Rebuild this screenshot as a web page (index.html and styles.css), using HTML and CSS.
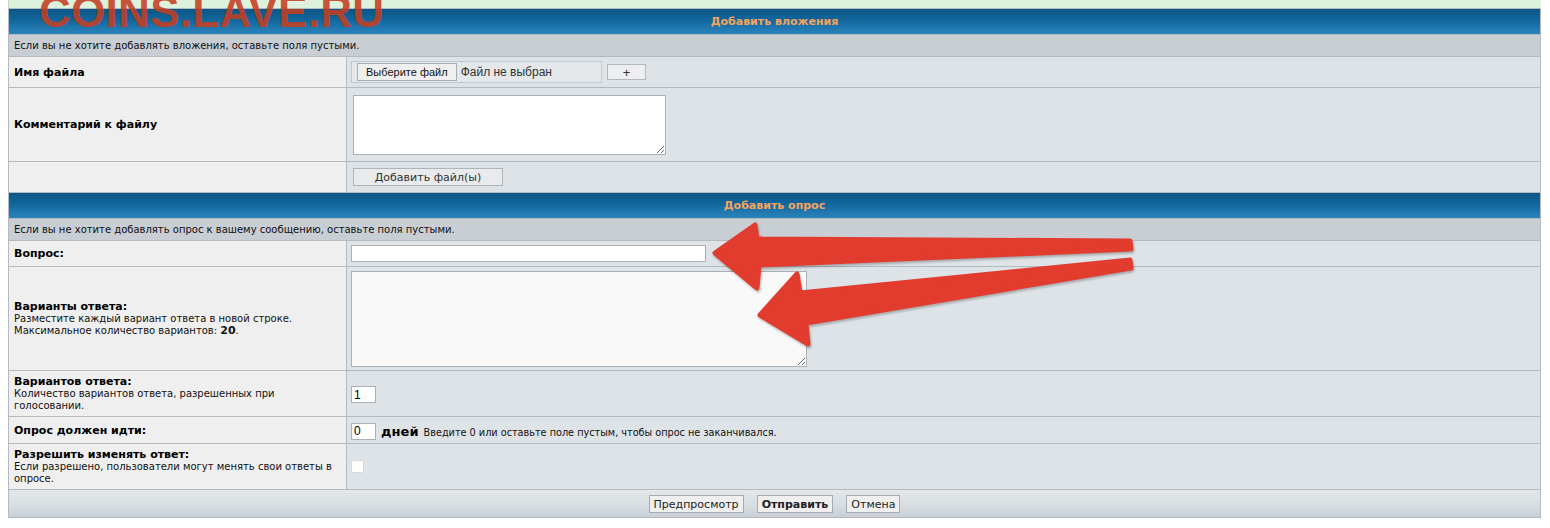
FILE: index.html
```html
<!DOCTYPE html>
<html lang="ru">
<head>
    <meta charset="UTF-8">
    <title>Добавить вложения</title>
    <link rel="stylesheet" href="styles.css">
</head>
<body>
    <div class="page">
        <div class="topstrip"></div>
        <table class="forumline">
            <tr><th colspan="2" class="thHead">Добавить вложения</th></tr>
            <tr><td colspan="2" class="hint">Если вы не хотите добавлять вложения, оставьте поля пустыми.</td></tr>
            <tr class="rowFile">
                <td class="row1"><b class="label">Имя файла</b></td>
                <td class="row2">
                    <span class="filebox"><span class="filebtn">Выберите файл</span><span class="filetxt">Файл не выбран</span></span>
                    <button class="plusbtn">+</button>
                </td>
            </tr>
            <tr class="rowComment">
                <td class="row1"><b class="label">Комментарий к файлу</b></td>
                <td class="row2"><textarea class="comment"></textarea></td>
            </tr>
            <tr class="rowAdd">
                <td class="row1"></td>
                <td class="row2"><button class="addbtn">Добавить файл(ы)</button></td>
            </tr>
            <tr><th colspan="2" class="thHead">Добавить опрос</th></tr>
            <tr><td colspan="2" class="hint">Если вы не хотите добавлять опрос к вашему сообщению, оставьте поля пустыми.</td></tr>
            <tr class="rowQuestion">
                <td class="row1"><b class="label">Вопрос:</b></td>
                <td class="row2"><input type="text" class="question"></td>
            </tr>
            <tr class="rowVariants">
                <td class="row1">
                    <b class="label">Варианты ответа:</b>
                    <span class="gensmall">Разместите каждый вариант ответа в новой строке.<br>Максимальное количество вариантов: <b>20</b>.</span>
                </td>
                <td class="row2"><textarea class="variants"></textarea></td>
            </tr>
            <tr class="rowCount">
                <td class="row1">
                    <b class="label">Вариантов ответа:</b>
                    <span class="gensmall">Количество вариантов ответа, разрешенных при<br>голосовании.</span>
                </td>
                <td class="row2"><input type="text" class="small" value="1"></td>
            </tr>
            <tr class="rowLength">
                <td class="row1"><b class="label">Опрос должен идти:</b></td>
                <td class="row2"><input type="text" class="small" value="0"> <b class="days">дней</b> <span class="gensmall inline">Введите 0 или оставьте поле пустым, чтобы опрос не заканчивался.</span></td>
            </tr>
            <tr class="rowChange">
                <td class="row1">
                    <b class="label">Разрешить изменять ответ:</b>
                    <span class="gensmall">Если разрешено, пользователи могут менять свои ответы в<br>опросе.</span>
                </td>
                <td class="row2"><input type="checkbox" class="check"></td>
            </tr>
            <tr>
                <td colspan="2" class="catBottom">
                    <button class="btn">Предпросмотр</button>
                    <button class="btn main">Отправить</button>
                    <button class="btn">Отмена</button>
                </td>
            </tr>
        </table>
        <div class="watermark">COINS.LAVE.RU</div>
        <svg class="arrows" width="1550" height="528" viewBox="0 0 1550 528">
            <polygon class="arrow" points="715,253 755,225 757,239 1130,241 1131,249 759,265 757,288"/>
            <polygon class="arrow" points="760,315 797,274 800,293 1130,260 1131,268 806,323 808,344"/>
        </svg>
    </div>
</body>
</html>
```

FILE: styles.css
```css
*{
    box-sizing: border-box;
}
body{
    margin: 0;
    background: #fff;
    font-family: "DejaVu Sans", Verdana, sans-serif;
    color: #000;
}
.page{
    position: relative;
    margin: 0 9px 0 8px;
}
.topstrip{
    height: 8px;
    background: #dcf2dc;
    border-left: 1px solid #c9d3cb;
}
.forumline{
    width: 100%;
    border-collapse: separate;
    border-spacing: 1px;
    background: #b3bac0;
}
.forumline td, .forumline th{
    padding: 0;
    vertical-align: middle;
}
.thHead{
    height: 25px;
    background: linear-gradient(to bottom, #0a5586 0%, #12679d 45%, #2c84bd 100%);
    color: #f5a45c;
    font-size: 11px;
    font-weight: bold;
    text-align: center;
}
.hint{
    height: 21px;
    background: #c8ced3;
    font-size: 10px;
    padding: 0 5px !important;
    color: #111;
}
.row1{
    width: 337px;
    background: #efefef;
    padding: 0 5px !important;
}
.row2{
    background: #dee3e7;
    padding: 0 4px !important;
}
.label{
    display: block;
    font-size: 11px;
    line-height: 13px;
}
.gensmall{
    display: block;
    font-size: 10px;
    line-height: 12px;
    color: #111;
}
.gensmall b{
    font-size: 11px;
}
.gensmall.inline{
    display: inline;
    font-size: 9.7px;
}
.rowFile td{ height: 30px; }
.rowComment td{ height: 73px; }
.rowAdd td{ height: 30px; }
.rowQuestion td{ height: 25px; }
.rowVariants td{ height: 103px; }
.rowCount td{ height: 45px; }
.rowLength td{ height: 26px; }
.rowChange td{ height: 45px; }

.filebox{
    display: inline-flex;
    align-items: center;
    vertical-align: middle;
    width: 251px;
    height: 22px;
    border: 1px solid #c4c9cd;
    background: #e4e8eb;
    padding-left: 5px;
    font-family: "Liberation Sans", Arial, sans-serif;
    color: #333;
}
.filebtn{
    display: inline-block;
    height: 18px;
    line-height: 16px;
    padding: 0 8px;
    border: 1px solid #a9aeb2;
    background: #efefef;
    font-size: 11px;
    color: #111;
}
.filetxt{
    margin-left: 4px;
    font-size: 12px;
}
.plusbtn{
    vertical-align: middle;
    width: 39px;
    height: 16px;
    margin-left: 0;
    padding: 0;
    border: 1px solid #b3b8bc;
    background: #eceeef;
    font-family: "Liberation Sans", Arial, sans-serif;
    font-size: 13px;
    line-height: 13px;
    color: #333;
}
.comment{
    display: block;
    margin-left: 2px;
    width: 313px;
    height: 60px;
    border: 1px solid #a9b0b6;
    background: #fff;
}
.addbtn{
    display: block;
    margin-left: 2px;
    width: 150px;
    height: 18px;
    padding: 0;
    border: 1px solid #b0b5ba;
    background: #e8eaec;
    font-family: "DejaVu Sans", Verdana, sans-serif;
    font-size: 11px;
    color: #333;
}
.question{
    display: block;
    width: 355px;
    height: 17px;
    border: 1px solid #a9b0b6;
    background: #fff;
    padding: 0 2px;
}
.variants{
    display: block;
    width: 456px;
    height: 96px;
    border: 1px solid #a9b0b6;
    background: #f9f9f9;
}
.small{
    width: 25px;
    height: 17px;
    border: 1px solid #a9b0b6;
    background: #fff;
    padding: 0 2px;
    font-family: "Liberation Sans", Arial, sans-serif;
    font-size: 12px;
    vertical-align: middle;
}
.days{
    font-size: 13px;
}
.check{
    appearance: none;
    display: block;
    width: 13px;
    height: 13px;
    margin: 0;
    border: 1px solid #d6dadd;
    border-radius: 2px;
    background: #fff;
}
.catBottom{
    height: 27px;
    background: linear-gradient(to bottom, #e4e8eb 0%, #d6dce0 60%, #c9d0d5 100%);
    text-align: center;
}
.btn{
    height: 18px;
    padding: 0 4px;
    margin: 0 4px;
    border: 1px solid #a6acb1;
    background: #efefef;
    font-family: "DejaVu Sans", Verdana, sans-serif;
    font-size: 11px;
    color: #222;
    vertical-align: middle;
}
.btn.main{
    font-weight: bold;
}
.watermark{
    position: absolute;
    left: 31px;
    top: -13px;
    font-family: "Liberation Sans", Arial, sans-serif;
    font-weight: bold;
    font-size: 44px;
    letter-spacing: 0.3px;
    color: rgba(196, 62, 34, 0.9);
    white-space: nowrap;
}
.arrows{
    position: absolute;
    left: -8px;
    top: 0;
    pointer-events: none;
}
.arrow{
    fill: #e23c2f;
    stroke: #e23c2f;
    stroke-width: 5;
    stroke-linejoin: round;
    filter: drop-shadow(1px 2px 1px rgba(0, 0, 0, 0.25));
}
```
